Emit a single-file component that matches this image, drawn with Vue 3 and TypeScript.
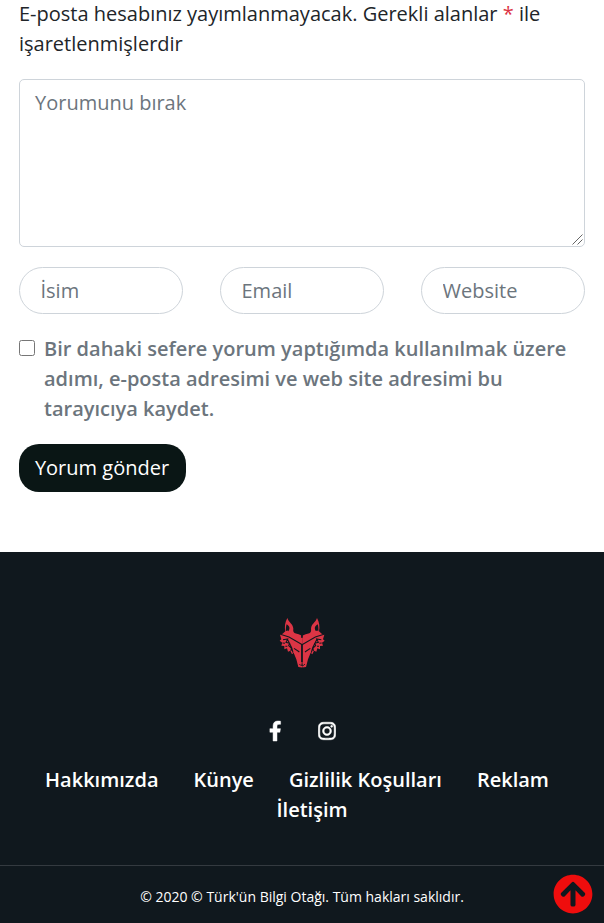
<script setup lang="ts">
import { ref } from 'vue'

interface Field {
  name: string
  placeholder: string
}

const fields: Field[] = [
  { name: 'author', placeholder: 'İsim' },
  { name: 'email', placeholder: 'Email' },
  { name: 'url', placeholder: 'Website' },
]
const links: string[] = ['Hakkımızda', 'Künye', 'Gizlilik Koşulları', 'Reklam', 'İletişim']
const remember = ref(false)
</script>

<template>
  <div class="page">
    <form class="comment-form" @submit.prevent>
      <p class="notes">
        E-posta hesabınız yayımlanmayacak. Gerekli alanlar <span class="required">*</span> ile işaretlenmişlerdir
      </p>
      <div class="comment-box">
        <textarea class="comment" placeholder="Yorumunu bırak"></textarea>
        <svg class="grip" viewBox="0 0 11 11" aria-hidden="true"><path d="M0.5 10.5L10.5 0.5M5.5 10.5L10.5 5.5" stroke="#555" stroke-width="0.9" /></svg>
      </div>
      <div class="fields">
        <input v-for="field in fields" :key="field.name" class="field" type="text" :name="field.name" :placeholder="field.placeholder" />
      </div>
      <label class="consent">
        <input v-model="remember" class="check" type="checkbox" />
        <span>Bir dahaki sefere yorum yaptığımda kullanılmak üzere adımı, e-posta adresimi ve web site adresimi bu tarayıcıya kaydet.</span>
      </label>
      <button class="submit" type="submit">Yorum gönder</button>
    </form>

    <footer class="footer">
      <svg class="logo" viewBox="0 0 192 210" aria-hidden="true">
        <g id="half">
          <path fill="#dc3545" fill-rule="evenodd" d="M52 30C45 42 43 57 46 70L38 77L30 80L34 94L29 98L37 104L34 113L43 114L43 124L51 121L54 131L61 128L66 139L71 134L79 154L85 177L96 178.500L96.500 83L86 79L75 76C70 73 69 68 70 62C69 47 56 44 52 30ZM50 49C59 54 61 61 55 70C53 67 51 67 48 70C47 62 48 54 50 49Z" />
          <path d="M31 79L57 87L97 110" fill="none" stroke="#10181e" stroke-width="3.200" />
          <path d="M97 80V89M97 109V163" fill="none" stroke="#10181e" stroke-width="5" />
          <path d="M39 95L53 93L48 103L59 106L56 113L64 120L63 129M38 105L45 106M46 115L52 115M72 121L84 129L88 132M53 95L65 119L69 134" fill="none" stroke="#10181e" stroke-width="3.200" />
          <path d="M88 168L92 172H97V166" fill="none" stroke="#10181e" stroke-width="2.500" />
        </g>
        <use href="#half" transform="translate(193 0) scale(-1 1)" />
      </svg>
      <div class="social">
        <a href="#" aria-label="Facebook">
          <svg class="facebook" viewBox="0 0 320 512"><path fill="currentColor" stroke="currentColor" stroke-width="12" d="M279.14 288l14.22-92.66h-88.91v-60.13c0-25.35 12.42-50.06 52.24-50.06h40.42V6.26S260.43 0 225.36 0c-73.22 0-121.08 44.38-121.08 124.72v70.62H22.89V288h81.39v224h100.17V288z" /></svg>
        </a>
        <a href="#" aria-label="Instagram">
          <svg class="instagram" viewBox="0 0 448 512"><path fill="currentColor" stroke="currentColor" stroke-width="14" d="M224.1 141c-63.6 0-114.9 51.3-114.9 114.9s51.3 114.9 114.9 114.9S339 319.5 339 255.9 287.7 141 224.1 141zm0 189.6c-41.1 0-74.7-33.5-74.7-74.7s33.5-74.7 74.7-74.7 74.7 33.5 74.7 74.7-33.6 74.7-74.7 74.7zm146.4-194.3c0 14.9-12 26.8-26.8 26.8-14.9 0-26.8-12-26.8-26.8s12-26.8 26.8-26.8 26.8 12 26.8 26.8zm76.1 27.2c-1.7-35.9-9.9-67.7-36.2-93.9-26.2-26.2-58-34.4-93.9-36.2-37-2.1-147.9-2.1-184.9 0-35.8 1.7-67.6 9.9-93.9 36.1s-34.4 58-36.2 93.9c-2.1 37-2.1 147.9 0 184.9 1.7 35.9 9.9 67.7 36.2 93.9s58 34.4 93.9 36.2c37 2.1 147.9 2.1 184.9 0 35.9-1.7 67.7-9.9 93.9-36.2 26.2-26.2 34.4-58 36.2-93.9 2.1-37 2.1-147.8 0-184.8zM398.8 388c-7.8 19.6-22.9 34.7-42.6 42.6-29.5 11.7-99.5 9-132.1 9s-102.7 2.6-132.1-9c-19.6-7.8-34.7-22.9-42.6-42.6-11.7-29.5-9-99.5-9-132.1s-2.6-102.7 9-132.1c7.8-19.6 22.9-34.7 42.6-42.6 29.5-11.7 99.5-9 132.1-9s102.7-2.6 132.1 9c19.6 7.8 34.7 22.9 42.6 42.6 11.7 29.5 9 99.5 9 132.1s2.7 102.7-9 132.1z" /></svg>
        </a>
      </div>
      <nav class="links">
        <a v-for="link in links" :key="link" href="#">{{ link }}</a>
      </nav>
      <div class="copyright">© 2020 © Türk'ün Bilgi Otağı. Tüm hakları saklıdır.</div>
    </footer>

    <a class="to-top" href="#" aria-label="Yukarı çık">
      <svg viewBox="0 0 512 512"><path fill="currentColor" d="M8 256C8 119 119 8 256 8s248 111 248 248-111 248-248 248S8 393 8 256zm143.6 28.9l72.4-75.5V392c0 13.3 10.7 24 24 24h16c13.3 0 24-10.7 24-24V209.4l72.4 75.5c9.3 9.7 24.8 9.9 34.3.4l10.9-11c9.4-9.4 9.4-24.6 0-33.9L273 107.7c-9.4-9.4-24.6-9.4-33.9 0L106.3 240.4c-9.4 9.4-9.4 24.6 0 33.9l10.9 11c9.6 9.5 25.1 9.3 34.4-.4z" /></svg>
    </a>
  </div>
</template>

<style>
body {
  margin: 0;
  overflow: hidden;
}
</style>

<style scoped>
.page,
.page * {
  box-sizing: border-box;
}
.page {
  position: relative;
  display: flex;
  flex-direction: column;
  height: 923px;
  overflow: hidden;
  background: #fff;
  color: #212529;
  font: 400 20px/30px 'Open Sans', sans-serif;
}
.comment-form {
  display: flex;
  flex-direction: column;
  flex: none;
  height: 552px;
  padding: 0 19px;
}
.notes {
  margin: -1px 0 20px;
}
.required {
  color: #dc3545;
}
.comment,
.field {
  border: 1px solid #ced4da;
  background: #fff;
  color: #495057;
  font: inherit;
  outline: none;
}
.comment-box {
  position: relative;
  flex: none;
}
.comment {
  display: block;
  width: 100%;
  height: 168px;
  padding: 8px 15px;
  border-radius: 5px;
  resize: none;
}
.grip {
  position: absolute;
  right: 2px;
  bottom: 2px;
  width: 11px;
  height: 11px;
  pointer-events: none;
}
.comment::placeholder,
.field::placeholder {
  color: #6c757d;
  opacity: 1;
}
.fields {
  display: grid;
  grid-template-columns: repeat(3, 164px);
  justify-content: space-between;
  margin-top: 20px;
}
.field {
  width: 100%;
  height: 47px;
  padding: 7px 21px 7px 20.5px;
  border-radius: 24px;
}
.consent {
  display: flex;
  align-items: flex-start;
  gap: 9px;
  margin-top: 20px;
  color: #6c757d;
  font-weight: 600;
}
.check {
  flex: none;
  width: 16px;
  height: 16px;
  margin: 6px 0 0;
}
.submit {
  align-self: flex-start;
  width: 167px;
  height: 48px;
  margin-top: 20px;
  padding: 0 1px 0 0;
  border: 0;
  border-radius: 20px;
  background: #0a1615;
  color: #fff;
  font: inherit;
  font-weight: 500;
}
.footer {
  display: flex;
  flex-direction: column;
  align-items: center;
  flex: 1;
  padding-top: 56px;
  background: #10181e;
  color: #fff;
}
.logo {
  width: 64px;
  height: 70px;
  flex: none;
}
.social {
  display: flex;
  gap: 36.5px;
  margin-top: 42.5px;
  margin-bottom: 0.5px;
  padding-left: 0.5px;
}
.social a {
  display: flex;
  color: #fff;
}
.facebook {
  width: 12.5px;
  height: 20px;
  overflow: visible;
}
.instagram {
  width: 18px;
  height: 20px;
}
.links {
  display: flex;
  flex-wrap: wrap;
  justify-content: center;
  column-gap: 5px;
  width: 564px;
  margin-top: 24px;
}
.links a {
  margin: 0 10px 0 20px;
  color: #fff;
  font-weight: 600;
  text-decoration: none;
}
.links a:first-child {
  margin-left: 0;
}
.links a:last-child {
  margin-right: 0;
}
.copyright {
  width: 100%;
  margin-top: 40px;
  padding-top: 16px;
  border-top: 1px solid #343a40;
  font-size: 14px;
  text-align: center;
}
.to-top {
  position: absolute;
  right: 11px;
  bottom: 9px;
  display: flex;
  width: 40px;
  height: 40px;
  color: #ef0d0d;
}
.to-top svg {
  width: 100%;
  height: 100%;
}
</style>
